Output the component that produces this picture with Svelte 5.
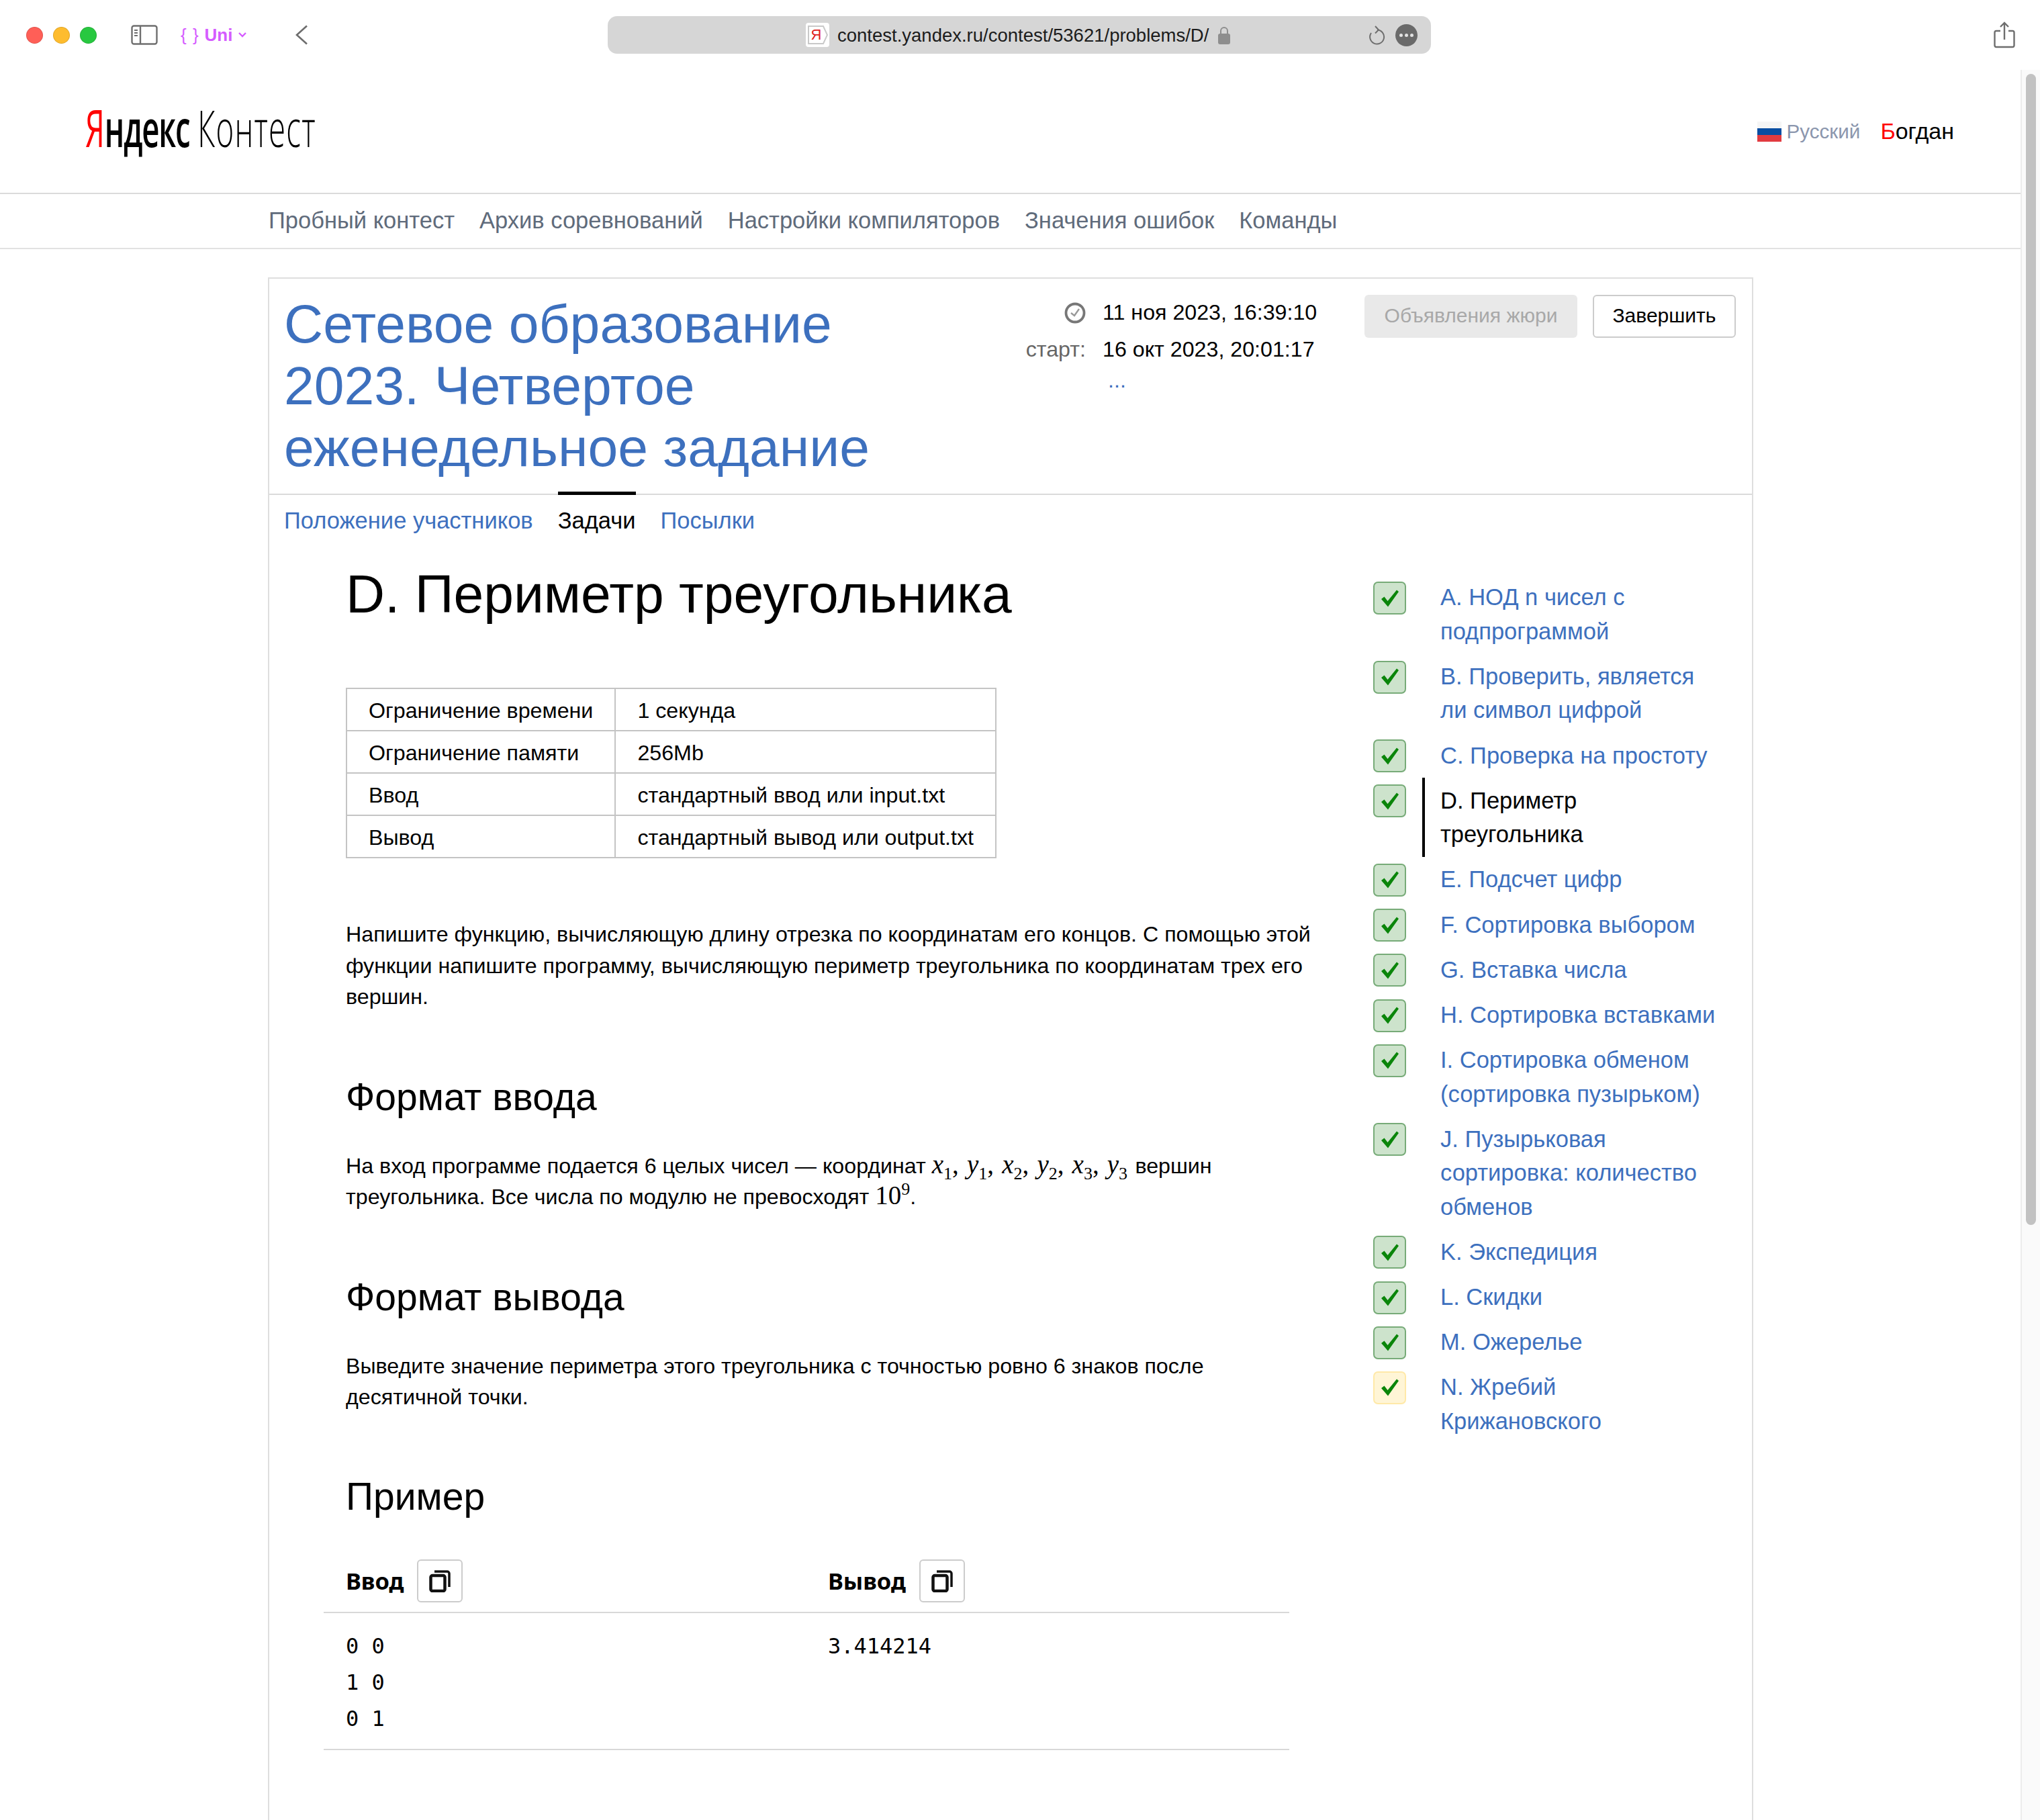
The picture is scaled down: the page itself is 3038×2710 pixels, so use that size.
<script>
	const problems = [
		{ name: 'A. НОД n чисел с подпрограммой' },
		{ name: 'B. Проверить, является ли символ цифрой' },
		{ name: 'C. Проверка на простоту' },
		{ name: 'D. Периметр треугольника', current: true },
		{ name: 'E. Подсчет цифр' },
		{ name: 'F. Сортировка выбором' },
		{ name: 'G. Вставка числа' },
		{ name: 'H. Сортировка вставками' },
		{ name: 'I. Сортировка обменом (сортировка пузырьком)' },
		{ name: 'J. Пузырьковая сортировка: количество обменов' },
		{ name: 'K. Экспедиция' },
		{ name: 'L. Скидки' },
		{ name: 'M. Ожерелье' },
		{ name: 'N. Жребий Крижановского', partial: true }
	];
	const nav = ['Пробный контест', 'Архив соревнований', 'Настройки компиляторов', 'Значения ошибок', 'Команды'];
	const limits = [
		['Ограничение времени', '1 секунда'],
		['Ограничение памяти', '256Mb'],
		['Ввод', 'стандартный ввод или input.txt'],
		['Вывод', 'стандартный вывод или output.txt']
	];
	const coords = [['x', 1], ['y', 1], ['x', 2], ['y', 2], ['x', 3], ['y', 3]];
</script>

{#snippet copyIcon()}
	<button class="copy" type="button" aria-label="copy">
		<svg width="32" height="34" viewBox="0 0 32 34" fill="none" stroke="#111" stroke-width="4.500">
			<rect x="2.500" y="9" width="21" height="23" rx="2.500" />
			<path d="M8 3h19a3 3 0 0 1 3 3v20" stroke-width="3.500" />
		</svg>
	</button>
{/snippet}

<div class="page">
	<div class="toolbar">
		<div class="lights">
			<span class="light red"></span>
			<span class="light yellow"></span>
			<span class="light green"></span>
		</div>
		<svg class="sidebar-icon" width="40" height="30" viewBox="0 0 40 30" fill="none" stroke="#6f6f6f">
			<rect x="1.500" y="1.500" width="37" height="27" rx="3" stroke-width="2.400" />
			<path d="M14 1.500v27" stroke-width="2.400" />
			<path d="M5 8h5M5 12h5M5 16h5" stroke-width="1.800" />
		</svg>
		<div class="uni"><span class="braces">{'{ }'}</span> Uni
			<svg width="14" height="10" viewBox="0 0 14 10" fill="none" stroke="#d55cff" stroke-width="2.400"><path d="M2 2l5 5 5-5" /></svg>
		</div>
		<svg class="back" width="20" height="30" viewBox="0 0 20 30" fill="none" stroke="#6d6d6d" stroke-width="2.600"><path d="M18 1.500L3 15l15 13.500" /></svg>
		<div class="address">
			<span class="favicon">
				<svg width="35" height="36" viewBox="0 0 35 36" fill="none" stroke="#c9c9c9" stroke-width="2"><path d="M4 5h22l6 13-6 13H4z" /></svg>
				<span class="favicon-letter">Я</span>
			</span>
			<span class="url">contest.yandex.ru/contest/53621/problems/D/</span>
			<svg class="lock" width="18" height="27" viewBox="0 0 18 27">
				<path d="M4 12V7a5 5 0 0 1 10 0v5" fill="none" stroke="#8e8e8e" stroke-width="2" />
				<rect y="11" width="18" height="16" rx="3" fill="#8e8e8e" />
			</svg>
			<svg class="reload" width="26" height="29" viewBox="0 0 26 29" fill="none" stroke="#6e6e6e" stroke-width="2">
				<path d="M14 6.500a10.500 10.500 0 1 1-9 4.500" />
				<path d="M11 1l5 5.500-5 5" />
			</svg>
			<span class="more"><i></i><i></i><i></i></span>
		</div>
		<svg class="share" width="32" height="40" viewBox="0 0 32 40" fill="none" stroke="#6e6e6e" stroke-width="2.400">
			<path d="M10 14H4a2.500 2.500 0 0 0-2.500 2.500v19A2.500 2.500 0 0 0 4 38h24a2.500 2.500 0 0 0 2.500-2.500v-19A2.500 2.500 0 0 0 28 14h-6" />
			<path d="M16 27V2M10 8l6-6 6 6" />
		</svg>
	</div>

	<header class="head">
		<div class="logo"><span class="logo-text"><span class="red-letter">Я</span><b>ндекс</b> <span class="logo-light">Контест</span></span></div>
		<div class="user">
			<span class="flag"><i></i><i></i><i></i></span>
			<span class="lang">Русский</span>
			<span class="login"><span class="red-letter">Б</span>огдан</span>
		</div>
	</header>

	<nav class="nav">
		{#each nav as item}
			<span>{item}</span>
		{/each}
	</nav>

	<div class="contest">
		<div class="contest-head">
			<h1>Сетевое образование 2023. Четвертое еженедельное задание</h1>
			<div class="times">
				<div class="time-row">
					<span class="time-label">
						<svg width="32" height="32" viewBox="0 0 32 32" fill="none" stroke="#777" stroke-width="3.800">
							<circle cx="16" cy="16" r="13.500" />
							<path d="M10 16l5 4 7-10" stroke="#999" stroke-width="2.400" />
						</svg>
					</span>
					<span>11 ноя 2023, 16:39:10</span>
				</div>
				<div class="time-row">
					<span class="time-label">старт:</span>
					<span>16 окт 2023, 20:01:17</span>
				</div>
				<div class="dots">...</div>
			</div>
			<div class="actions">
				<span class="btn disabled">Объявления жюри</span>
				<span class="btn">Завершить</span>
			</div>
		</div>

		<div class="tabs">
			<span class="tab">Положение участников</span>
			<span class="tab active">Задачи</span>
			<span class="tab">Посылки</span>
		</div>

		<div class="body">
			<main class="statement">
				<h2 class="title">D. Периметр треугольника</h2>
				<table class="limits">
					<tbody>
						{#each limits as row}
							<tr><td class="key">{row[0]}</td><td>{row[1]}</td></tr>
						{/each}
					</tbody>
				</table>

				<p class="legend">Напишите функцию, вычисляющую длину отрезка по координатам его концов. С помощью этой функции напишите программу, вычисляющую периметр треугольника по координатам трех его вершин.</p>

				<h3>Формат ввода</h3>
				<p>На вход программе подается 6 целых чисел — координат
					{#each coords as c, i}<span class="math coord"><em>{c[0]}</em><sub>{c[1]}</sub>{i < 5 ? ', ' : ''}</span>{/each}
					вершин треугольника. Все числа по модулю не превосходят <span class="math">10<sup>9</sup></span>.</p>

				<h3>Формат вывода</h3>
				<p>Выведите значение периметра этого треугольника с точностью ровно 6 знаков после десятичной точки.</p>

				<h3 class="example">Пример</h3>
				<div class="sample">
					<div class="sample-head">
						<div class="sample-col"><b>Ввод</b>{@render copyIcon()}</div>
						<div class="sample-col"><b>Вывод</b>{@render copyIcon()}</div>
					</div>
					<div class="sample-body">
						<pre class="sample-col">0 0
1 0
0 1</pre>
						<pre class="sample-col">3.414214</pre>
					</div>
				</div>
			</main>

			<aside class="problems">
				{#each problems as p}
					<div class="problem">
						<span class="status" class:partial={p.partial}>
							<svg width="30" height="28" viewBox="0 0 30 28"><path d="M2 15l4.500-3.500 5 6.500L25 1.500l3 2.500L12 26.500z" fill="#0a850a" /></svg>
						</span>
						<span class="problem-name" class:current={p.current}>{p.name}</span>
					</div>
				{/each}
			</aside>
		</div>
	</div>

	<div class="scrollbar"><div class="thumb"></div></div>
</div>

<style>
	:global(body) {
		margin: 0;
		background: #fff;
	}

	.page {
		position: relative;
		width: 3038px;
		height: 2710px;
		overflow: hidden;
		font-family: 'Liberation Sans', Arial, sans-serif;
		font-size: 32.200px;
		color: #000;
	}

	.toolbar {
		display: flex;
		align-items: center;
		height: 104px;
		padding-left: 39px;
		box-sizing: border-box;
	}

	.lights {
		display: flex;
		gap: 15px;
		margin-right: 51px;
	}

	.light {
		width: 25px;
		height: 25px;
		border-radius: 50%;
		box-sizing: border-box;
		border: 1px solid rgba(0, 0, 0, 0.12);
	}

	.red { background: #ff5f57; }
	.yellow { background: #febc2e; }
	.green { background: #28c840; }

	.sidebar-icon {
		margin-right: 34px;
	}

	.uni {
		display: flex;
		align-items: center;
		gap: 8px;
		width: 106px;
		margin-right: 64px;
		color: #d55cff;
		font-size: 26px;
		font-weight: 600;
		white-space: nowrap;
	}

	.braces {
		font-weight: 400;
		letter-spacing: 1px;
	}

	.back {
		margin-right: 446px;
	}

	.address {
		display: flex;
		align-items: center;
		width: 1226px;
		height: 56px;
		padding: 0 20px 0 295px;
		box-sizing: border-box;
		background: #d6d6d6;
		border-radius: 14px;
	}

	.favicon {
		position: relative;
		display: flex;
		align-items: center;
		justify-content: center;
		width: 35px;
		height: 36px;
		margin-right: 12px;
		background: #fff;
		border-radius: 4px;
	}

	.favicon svg {
		position: absolute;
		top: 0;
		left: 0;
	}

	.favicon-letter {
		position: relative;
		margin-right: 4px;
		color: #e02020;
		font-size: 22px;
	}

	.url {
		font-size: 27.500px;
		color: #1c1c1c;
		white-space: nowrap;
		padding-top: 2px;
	}

	.lock {
		margin-left: 14px;
	}

	.reload {
		margin-left: auto;
		margin-right: 15px;
	}

	.more {
		display: flex;
		align-items: center;
		justify-content: center;
		gap: 3px;
		width: 33px;
		height: 33px;
		border-radius: 50%;
		background: #6a6a6a;
	}

	.more i {
		width: 5px;
		height: 5px;
		border-radius: 50%;
		background: #e2e2e2;
	}

	.share {
		margin-left: 838px;
	}

	.head {
		display: flex;
		align-items: center;
		justify-content: space-between;
		height: 185px;
		padding: 0 128px 0 127px;
		box-sizing: border-box;
		border-bottom: 2px solid #dadada;
	}

	.logo {
		width: 350px;
		margin-top: -11px;
	}

	.logo-text {
		display: inline-block;
		font-family: 'Open Sans', sans-serif;
		font-weight: 300;
		font-size: 76px;
		line-height: 1;
		white-space: nowrap;
		transform: scaleX(0.6);
		transform-origin: left center;
	}

	.logo-text b {
		font-weight: 600;
		letter-spacing: -2px;
	}

	.logo-light {
		letter-spacing: 2px;
	}

	.red-letter {
		color: #f00;
	}

	.logo-text .red-letter {
		font-weight: 400;
	}

	.user {
		display: flex;
		align-items: center;
	}

	.flag {
		display: flex;
		flex-direction: column;
		width: 36px;
		margin-right: 8px;
	}

	.flag i {
		height: 10px;
		background: #fff;
	}

	.flag i:nth-child(1) { background: #f5f5f5; }
	.flag i:nth-child(2) { background: #0a4ea2; }
	.flag i:nth-child(3) { background: #e23b40; }

	.lang {
		margin-right: 30px;
		color: #8b96ad;
		font-size: 29.600px;
	}

	.login {
		font-size: 34px;
	}

	.nav {
		display: flex;
		gap: 37px;
		align-items: center;
		height: 78px;
		padding: 0 0 2px 400px;
		border-bottom: 2px solid #e2e2e2;
		color: #5f6b7b;
		font-size: 34.500px;
	}

	.contest {
		margin: 42px 0 0 399px;
		width: 2212px;
		min-height: 2400px;
		box-sizing: border-box;
		border: 2px solid #dedede;
		border-bottom: 0;
	}

	.contest-head {
		display: flex;
		align-items: flex-start;
		height: 322px;
		box-sizing: border-box;
		padding: 21px 24px 0 22px;
		border-bottom: 2px solid #dadada;
	}

	h1 {
		width: 1005px;
		margin: 0;
		color: #3d70be;
		font-size: 80.500px;
		font-weight: 400;
		line-height: 92px;
	}

	.times {
		width: 483px;
		margin: 2px 0 0 98px;
	}

	.time-row {
		display: flex;
		align-items: center;
		gap: 25px;
		height: 55px;
	}

	.time-label {
		display: flex;
		justify-content: flex-end;
		width: 91px;
		color: #666;
	}

	.dots {
		margin: 0 0 0 124px;
		color: #3d70be;
		line-height: 36px;
	}

	.actions {
		display: flex;
		gap: 23px;
		margin-top: 3px;
		margin-left: auto;
	}

	.btn {
		display: flex;
		align-items: center;
		justify-content: center;
		width: 213px;
		height: 64px;
		box-sizing: border-box;
		padding-bottom: 2px;
		border: 2px solid #ccc;
		border-radius: 6px;
		font-size: 30px;
	}

	.btn.disabled {
		width: 317px;
		border: 0;
		background: #e9e9e9;
		color: #a8a8a8;
	}

	.tabs {
		display: flex;
		gap: 37px;
		padding: 0 0 2px 22px;
		height: 76px;
	}

	.tab {
		display: flex;
		align-items: center;
		color: #3d70be;
		font-size: 34.500px;
	}

	.tab.active {
		color: #000;
		border-top: 5px solid #000;
		margin-top: -5px;
	}

	.body {
		display: flex;
		padding-left: 114px;
	}

	.statement {
		width: 1440px;
		flex: none;
	}

	.title {
		margin: 0;
		padding-top: 19px;
		font-size: 80.400px;
		font-weight: 400;
		line-height: 100px;
	}

	.limits {
		width: 969px;
		margin-top: 90px;
		border-collapse: collapse;
	}

	.limits td {
		height: 63px;
		padding: 3px 32px 0;
		box-sizing: border-box;
		border: 2px solid #c4c4c4;
		white-space: nowrap;
	}

	.limits .key {
		width: 402px;
	}

	p {
		margin: 0;
		line-height: 46.500px;
	}

	.legend {
		margin-top: 90px;
	}

	h3 {
		margin: 90px 0 45px;
		font-size: 57px;
		font-weight: 400;
		line-height: 70px;
	}

	h3.example {
		margin-top: 89px;
	}

	.math {
		font-family: 'Liberation Serif', serif;
		font-size: 39px;
		line-height: 1;
	}

	.math.coord {
		margin-right: 2.400px;
	}

	.math sub,
	.math sup {
		font-size: 26px;
		line-height: 0;
	}

	.sample {
		margin: -3px 0 0 -33px;
		width: 1438px;
	}

	.sample-head {
		display: flex;
		align-items: center;
		height: 92px;
		padding-top: 4px;
		margin-top: -4px;
		border-bottom: 2px solid #d8d8d8;
	}

	.sample-col {
		display: flex;
		align-items: center;
		gap: 20px;
		width: 718px;
		flex: none;
		box-sizing: border-box;
		padding-left: 33px;
		margin: 0;
	}

	.sample-col b {
		font-family: 'Noto Sans', sans-serif;
		font-weight: 700;
		font-size: 34.500px;
	}

	.copy {
		display: flex;
		align-items: center;
		justify-content: center;
		width: 68px;
		height: 64px;
		padding: 0;
		background: #fff;
		border: 2px solid #ccc;
		border-radius: 6px;
	}

	.sample-body {
		display: flex;
		padding: 22px 0 18px;
		border-bottom: 2px solid #d8d8d8;
	}

	pre.sample-col {
		display: block;
		font-family: 'DejaVu Sans Mono', monospace;
		font-size: 32px;
		line-height: 54px;
	}

	.problems {
		width: 530px;
		margin-left: 90px;
		padding-top: 41px;
		font-size: 34.500px;
		line-height: 50.400px;
		color: #3d70be;
	}

	.problem {
		display: flex;
		align-items: flex-start;
	}

	.status {
		display: flex;
		align-items: center;
		justify-content: center;
		flex: none;
		width: 49px;
		height: 49px;
		margin: 10px 24px 0 0;
		box-sizing: border-box;
		background: #cde3cc;
		border: 2px solid #77ab78;
		border-radius: 7px;
	}

	.status.partial {
		background: #fff5d6;
		border-color: #ffe9a8;
	}

	.problem-name {
		width: 414px;
		padding: 8.400px 0 8.400px 23px;
		border-left: 4px solid transparent;
	}

	.problem-name.current {
		border-left-color: #000;
		color: #000;
	}

	.scrollbar {
		position: absolute;
		top: 104px;
		right: 0;
		bottom: 0;
		width: 29px;
		box-sizing: border-box;
		background: #fafafa;
		border-left: 2px solid #ececec;
	}

	.thumb {
		position: absolute;
		top: 6px;
		left: 6px;
		width: 15px;
		height: 1714px;
		border-radius: 8px;
		background: #c2c2c2;
	}
</style>
